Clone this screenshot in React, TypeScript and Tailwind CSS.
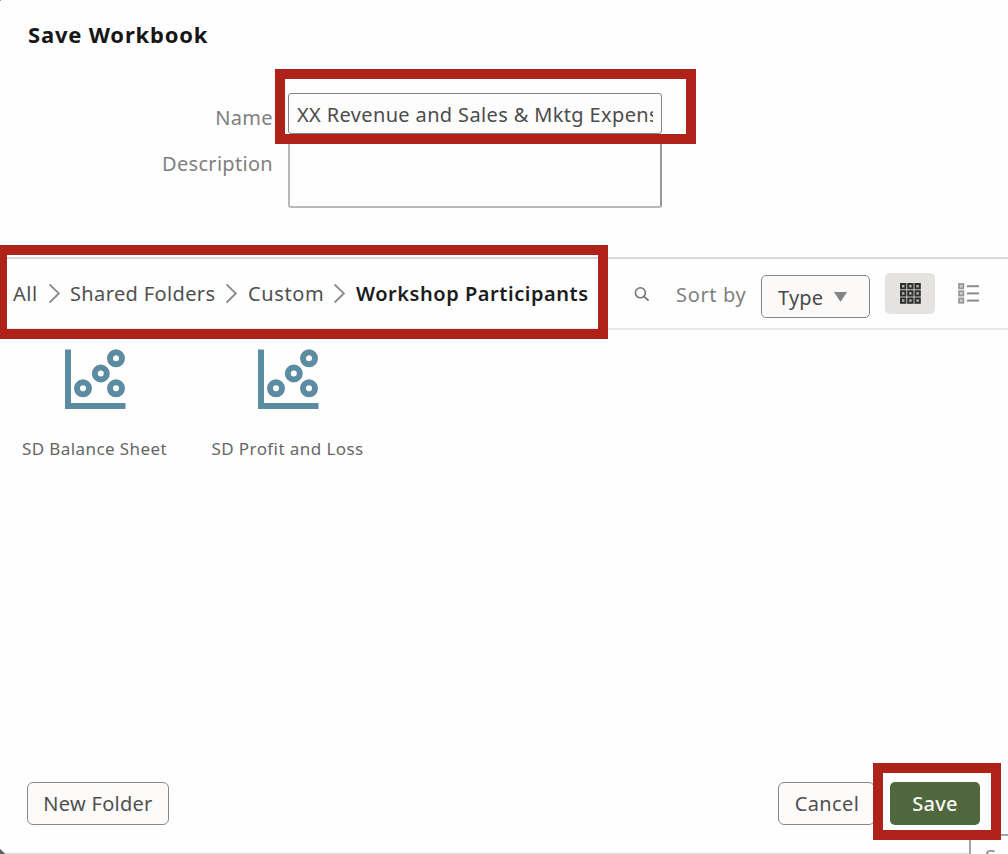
import type { ReactNode } from "react";

function Crumb({ label, className }: { label: string; className: string }) {
  return <span className={className}>{label}</span>;
}

function Chevron({ className }: { className: string }) {
  return (
    <svg className={className} width="12" height="20" viewBox="0 0 12 20" fill="none" stroke="#8a8a8a" strokeWidth="1.9">
      <path d="M0.5 0.4 L9.8 9.4 L0.5 18.6" />
    </svg>
  );
}

function ScatterIcon() {
  return (
    <svg width="62" height="61" viewBox="0 0 62 61" fill="none" stroke="#5c8ca2" strokeWidth="6">
      <path d="M4 0.5 V57 H61.5" />
      <circle cx="19" cy="39.3" r="6" />
      <circle cx="36.8" cy="24.5" r="6" />
      <circle cx="52" cy="9.3" r="6" />
      <circle cx="52" cy="39.3" r="6" />
    </svg>
  );
}

function SearchIcon() {
  return (
    <svg width="16" height="16" viewBox="0 0 16 16" fill="none" stroke="#737373" strokeWidth="1.6">
      <circle cx="6.4" cy="5.8" r="5" />
      <path d="M10 9.4 L14.6 13.6" />
    </svg>
  );
}

function GridIcon() {
  const steps = [0, 7.2, 14.4];
  return (
    <svg width="21" height="21" viewBox="0 0 21 21" fill="#b4b4b0" stroke="#2f2f2f" strokeWidth="2">
      {steps.map((y) => steps.map((x) => <rect key={`${x}-${y}`} x={x + 1} y={y + 1} width="4.4" height="4.4" />))}
    </svg>
  );
}

function ListIcon() {
  const rows = [0, 7.2, 14.4];
  return (
    <svg width="22" height="21" viewBox="0 0 22 21" fill="none" stroke="#969696" strokeWidth="1.7">
      {rows.map((y) => (
        <g key={y}>
          <rect x="1" y={y + 1} width="4.4" height="4.4" fill="#cccccc" />
          <path d={`M9 ${y + 3.2} H21`} stroke="#8a8a8a" strokeWidth="2" />
        </g>
      ))}
    </svg>
  );
}

function FileTile({ className, children }: { className: string; children: ReactNode }) {
  return (
    <div className={className}>
      <ScatterIcon />
      <div className="mt-[27px] text-[17px] leading-6 whitespace-nowrap text-[#666666]">{children}</div>
    </div>
  );
}

export default function App() {
  return (
    <div className="relative flex h-[854px] w-[1008px] flex-col overflow-hidden bg-[#fefefe] font-['Noto_Sans','Open_Sans',sans-serif] text-[20px] leading-7">
      <h1 className="ml-[28px] pt-[20px] text-[22px] leading-7 font-bold tracking-[0.8px] text-[#161616]">Save Workbook</h1>

      <div className="mt-[45px] flex">
        <div className="flex w-[273px] flex-col items-end text-[#808080]">
          <label className="mt-[11px] tracking-[0.35px]">Name</label>
          <label className="mt-[18px] tracking-[0.3px]">Description</label>
        </div>
        <div className="ml-[15px] flex w-[374px] flex-col gap-[5px]">
          <div className="h-[41px] rounded-[3px] border border-[#85857a] bg-[#fdfdfd] px-2 pt-[7px]">
            <div className="overflow-hidden tracking-[0.36px] whitespace-nowrap text-[#4c4c4c]">
              XX Revenue and Sales &amp; Mktg Expense
            </div>
          </div>
          <div className="h-[69px] rounded-[3px] border-2 border-[#b8b8b8] border-r-[#989898] bg-[#fefefe]" />
        </div>
      </div>

      <div className="mt-[49px] flex h-[73px] items-start border-t-2 border-b-2 border-t-[#d8d8d8] border-b-[#e8e8e8] text-[#505050]">
        <nav className="flex w-[634px] items-center pt-[21px] pl-[13px] whitespace-nowrap">
          <Crumb label="All" className="w-[36px] tracking-[0.5px]" />
          <Chevron className="w-3" />
          <Crumb label="Shared Folders" className="ml-[9px] w-[152px] tracking-[0.37px]" />
          <Chevron className="ml-[4px] w-3" />
          <Crumb label="Custom" className="ml-[10px] w-[86px] tracking-[0.6px]" />
          <Chevron className="w-3" />
          <Crumb label="Workshop Participants" className="ml-[10px] font-semibold tracking-[0.54px] text-[#1c1c1c]" />
        </nav>
        <div className="mt-[28px]">
          <SearchIcon />
        </div>
        <span className="mt-[22px] ml-[26px] w-[85px] tracking-[0.65px] text-[#808080]">Sort by</span>
        <button className="mt-[16px] flex h-[43px] w-[109px] items-center rounded-[5px] border border-[#868686] bg-[#fbfaf8] pl-4 text-[#4a4a4a]">
          <span className="mt-[2px] w-[56px] text-left tracking-[0.2px]">Type</span>
          <svg width="13" height="10" viewBox="0 0 13 10" fill="#858585">
            <path d="M0 0 H13 L6.5 10 Z" />
          </svg>
        </button>
        <button className="mt-[14px] ml-[15px] flex h-[41px] w-[50px] items-center justify-center rounded-[5px] bg-[#e4e3df]">
          <GridIcon />
        </button>
        <div className="mt-[24px] ml-[23px]">
          <ListIcon />
        </div>
      </div>

      <div className="flex grow pt-[19px]">
        <FileTile className="flex w-[189px] flex-col items-center">
          <span className="tracking-[0.42px]">SD Balance Sheet</span>
        </FileTile>
        <FileTile className="flex w-[197px] flex-col items-center">
          <span className="tracking-[0.42px]">SD Profit and Loss</span>
        </FileTile>
      </div>

      <div className="flex h-[72px] items-start pr-[28px] pl-[27px] text-[#505050]">
        <button className="h-[43px] w-[142px] rounded-[6px] border border-[#888888] bg-[#fcfbf9] pt-px tracking-[0.28px]">
          New Folder
        </button>
        <button className="ml-auto h-[43px] w-[97px] rounded-[6px] border border-[#888888] bg-[#fcfbf9] pt-px pl-px tracking-[0.4px]">
          Cancel
        </button>
        <button className="ml-[15px] h-[43px] w-[90px] rounded-[5px] bg-[#50673d] pt-px font-medium tracking-[0.3px] text-[#f8f9f6]">
          Save
        </button>
      </div>

      {/* Part of the page behind the dialog */}
      <div className="absolute bottom-0 left-0 h-px w-[969px] bg-[#dcdcdc]" />
      <div className="absolute top-[834px] left-[969px] h-[20px] w-[39px] overflow-hidden border-t-2 border-l-2 border-[#a4a4a4]">
        <span className="absolute top-[7px] left-[14px] text-[#888888]">S</span>
      </div>
      <div className="absolute -bottom-[5px] -left-[5px] size-[9px] rotate-45 bg-[#606060]" />
      <div className="absolute -top-px -left-px size-[2px] bg-[#909090]" />

      {/* Callout frames */}
      <div className="absolute top-[69px] left-[275px] h-[75px] w-[421px] border-10 border-[#ae2219]" />
      <div className="absolute top-[245px] -left-[3px] h-[94px] w-[611px] border-10 border-[#ae2219]" />
      <div className="absolute top-[763px] left-[873px] h-[77px] w-[128px] border-10 border-[#ae2219]" />
    </div>
  );
}
